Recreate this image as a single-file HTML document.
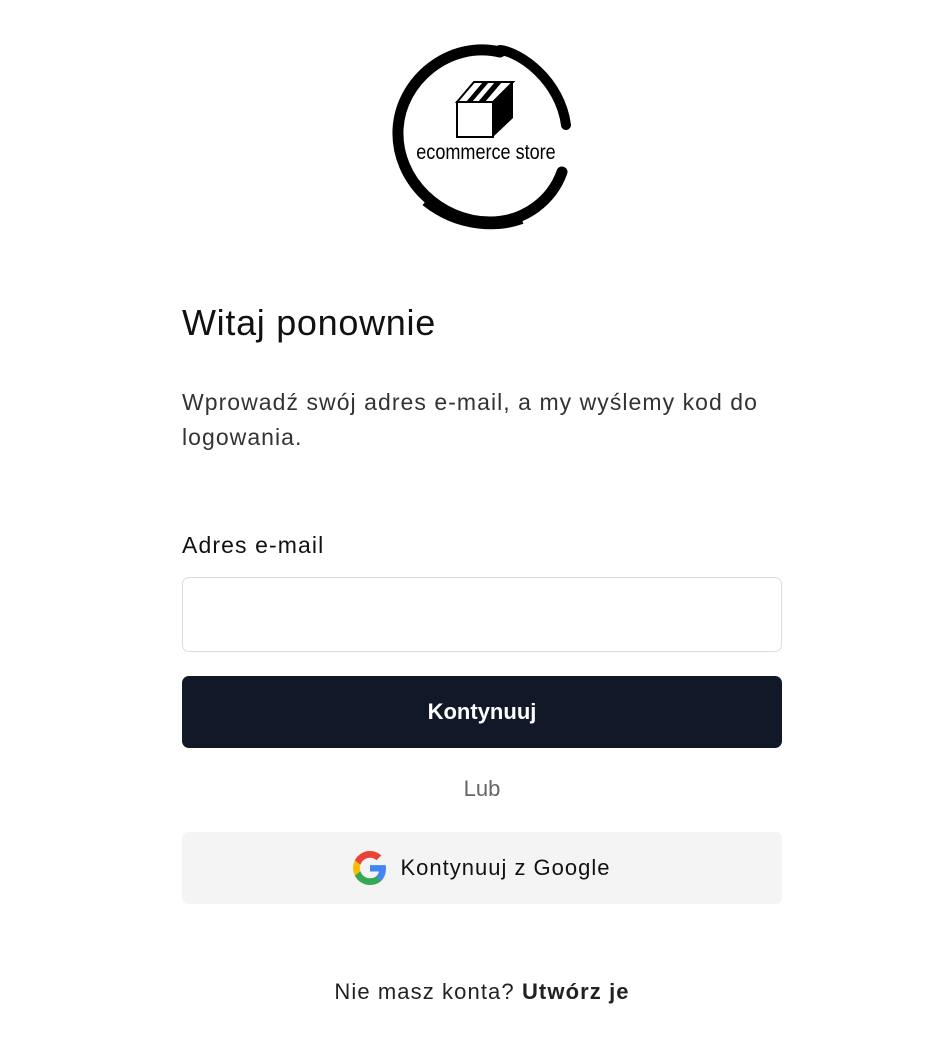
<!DOCTYPE html>
<html><head><meta charset="utf-8"><style>
body{margin:0;width:952px;height:1052px;background:#fff;font-family:"Liberation Sans",sans-serif;color:#111;position:relative;overflow:hidden}
.a{position:absolute}
</style></head><body>
<svg class="a" style="left:380px;top:40px" width="200" height="200" viewBox="380 40 200 200">
<path d="M500 52 C450 40 400 80 398 130 C396 180 440 222 490 222 C525 222 552 200 562 172" fill="none" stroke="#000" stroke-width="11" stroke-linecap="round"/>
<path d="M500 50 C520 52 560 80 566 125" fill="none" stroke="#000" stroke-width="10" stroke-linecap="round"/>
<path d="M425 202 C460 230 500 228 522 220" fill="none" stroke="#000" stroke-width="8"/>
<polygon points="457,102 474,82 513,82 493,102" fill="#fff" stroke="#000" stroke-width="2"/>
<polygon points="478,102 495,82 502,82 485,102" fill="#000"/>
<polygon points="466,102 483,82 489,82 472,102" fill="#000"/>
<polygon points="493,102 513,82 513,118 493,137" fill="#000"/>
<rect x="457" y="102" width="36" height="35" fill="#fff" stroke="#000" stroke-width="2"/>
<text x="486" y="159" text-anchor="middle" font-family="Liberation Sans" font-size="21" transform="translate(486 0) scale(0.86 1) translate(-486 0)">ecommerce store</text>
</svg>
<div class="a" style="left:182px;top:302px;font-size:36px;letter-spacing:0.7px;color:#111">Witaj ponownie</div>
<div class="a" style="left:182px;top:385px;width:600px;font-size:23px;letter-spacing:1.05px;line-height:35px;color:#333">Wprowadź swój adres e-mail, a my wyślemy kod do logowania.</div>
<div class="a" style="left:182px;top:532px;font-size:23px;letter-spacing:1.1px;color:#111">Adres e-mail</div>
<div class="a" style="left:182px;top:577px;border:1px solid #dcdcdc;border-radius:7px;box-sizing:border-box;width:600px;height:75px"></div>
<div class="a" style="left:182px;top:676px;width:600px;height:72px;background:#111827;border-radius:7px;color:#fff;font-size:22px;font-weight:bold;text-align:center;line-height:72px">Kontynuuj</div>
<div class="a" style="left:182px;top:776px;width:600px;text-align:center;font-size:22px;color:#666">Lub</div>
<div class="a" style="left:182px;top:832px;width:600px;height:72px;background:#f4f4f4;border-radius:7px;font-size:22px;letter-spacing:1px;display:flex;align-items:center;justify-content:center;color:#111"><svg width="34" height="34" viewBox="0 0 48 48" style="margin-right:13px"><path fill="#EA4335" d="M24 9.5c3.5 0 6.6 1.2 9.1 3.6l6.8-6.8C35.8 2.4 30.3 0 24 0 14.6 0 6.6 5.4 2.6 13.2l7.9 6.2C12.4 13.7 17.7 9.5 24 9.5z"/><path fill="#4285F4" d="M46.5 24.5c0-1.6-.1-3.1-.4-4.5H24v9h12.7c-.6 3-2.2 5.5-4.7 7.2l7.7 6c4.5-4.2 6.8-10.4 6.8-17.7z"/><path fill="#FBBC05" d="M10.5 28.6c-.5-1.4-.8-3-.8-4.6s.3-3.2.8-4.6l-7.9-6.2C.9 16.5 0 20.1 0 24s.9 7.5 2.6 10.8l7.9-6.2z"/><path fill="#34A853" d="M24 48c6.5 0 11.9-2.1 15.9-5.8l-7.7-6c-2.2 1.5-5 2.3-8.2 2.3-6.3 0-11.6-4.2-13.5-10l-7.9 6.2C6.6 42.6 14.6 48 24 48z"/></svg>Kontynuuj z Google</div>
<div class="a" style="left:182px;top:979px;width:600px;text-align:center;font-size:22px;letter-spacing:1.1px;color:#222">Nie masz konta? <b>Utwórz je</b></div>
</body></html>
